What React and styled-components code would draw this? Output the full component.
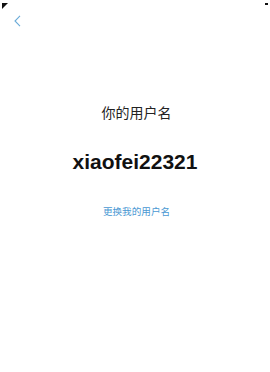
import React from 'react'
import styled, { createGlobalStyle } from 'styled-components'

const GlobalStyle = createGlobalStyle`
  html, body {
    margin: 0;
    padding: 0;
    background: #fff;
  }
  body {
    font-family: "Noto Sans CJK SC", "Noto Sans", sans-serif;
  }
`

const Screen = styled.div`
  position: relative;
  width: 270px;
  height: 372px;
  background: #fff;
  overflow: hidden;
`

const Corner = styled.div`
  position: absolute;
  top: 3px;
  ${p => (p.right ? 'right: 2px;' : 'left: 2px;')}
  width: ${p => (p.right ? 3 : 6)}px;
  height: ${p => (p.right ? 2 : 6)}px;
  background: #111;
  clip-path: ${p => (p.right ? 'none' : 'polygon(0 0, 100% 0, 0 100%)')};
`

const TopBar = styled.div`
  height: 40px;
  display: flex;
  align-items: flex-start;
  padding: 15px 0 0 13px;
  box-sizing: border-box;
`

const BackButton = styled.button`
  border: 0;
  background: none;
  padding: 0;
  width: 9px;
  height: 12px;
  display: flex;
  cursor: pointer;
`

const Content = styled.div`
  display: flex;
  flex-direction: column;
  align-items: center;
  padding-top: 62px;
`

const Label = styled.div`
  font-size: 14px;
  line-height: 20px;
  color: #222;
  margin-left: 3px;
`

const Username = styled.div`
  margin-top: 27px;
  font-family: "Liberation Sans", Arial, sans-serif;
  font-weight: 700;
  font-size: 21px;
  line-height: 26px;
  color: #111;
`

const ChangeLink = styled.a`
  margin-top: 29px;
  margin-left: 3px;
  font-size: 9.6px;
  line-height: 14px;
  color: #4a98d3;
  text-decoration: none;
`

export default function App() {
  return (
    <>
      <GlobalStyle />
      <Screen>
        <Corner />
        <Corner right />
        <TopBar>
          <BackButton aria-label="back">
            <svg width="9" height="12" viewBox="0 0 9 12">
              <path d="M7 0.8 L2 6 L7 11.2" fill="none" stroke="#6aabd8" strokeWidth="1.1" />
            </svg>
          </BackButton>
        </TopBar>
        <Content>
          <Label>你的用户名</Label>
          <Username>xiaofei22321</Username>
          <ChangeLink href="#">更换我的用户名</ChangeLink>
        </Content>
      </Screen>
    </>
  )
}
